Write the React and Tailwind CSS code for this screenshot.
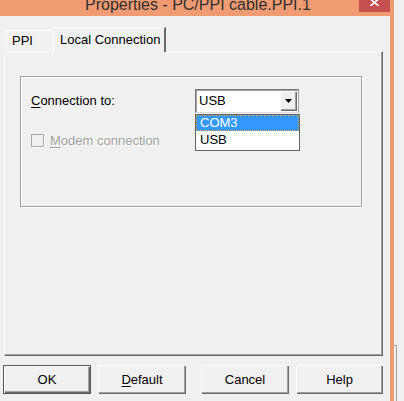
import React from "react";

const raised =
  "shadow-[inset_1px_1px_0_#ffffff,inset_-1px_-1px_0_#696969,inset_-2px_-2px_0_#a0a0a0]";

function Btn({ children, isDefault, className = "" }) {
  return (
    <div
      className={`h-[29px] flex items-center justify-center bg-[#f0f0f0] text-[13px] text-black ${
        isDefault ? "border border-[#555555]" : ""
      } ${raised} ${className}`}
    >
      {children}
    </div>
  );
}

export default function App() {
  return (
    <div className="flex w-[404px] h-[401px] bg-[#f0f0f0] overflow-hidden font-['Liberation_Sans','Arial',sans-serif] text-black">
      {/* main window */}
      <div className="w-[390px] h-full flex flex-col">
        {/* title bar */}
        <div className="h-[16px] bg-[#f19b72] flex overflow-hidden">
          <div className="flex-1 flex items-end pl-[85px] pb-[3px]">
            <span className="text-[16px] leading-[16px] text-[#2f2f2f] whitespace-nowrap">
              Properties - PC/PPI cable.PPI.1
            </span>
          </div>
          <div className="w-[31px] h-[12px] bg-[#c75050] flex justify-center">
            <svg width="9" height="7" viewBox="0 0 9 7" className="mt-[-1px]">
              <path d="M0.5 0 L8.5 7 M8.5 0 L0.5 7" stroke="#ffffff" strokeWidth="1.6" />
            </svg>
          </div>
        </div>

        {/* body */}
        <div className="flex-1 flex flex-col pt-[11px]">
          {/* tabs */}
          <div className="h-[24px] flex items-end pl-[6px]">
            <div className="w-[47px] h-[21px] border-t border-l border-white flex items-center pl-[5px] text-[13px]">
              PPI
            </div>
            <div className="relative z-10 w-[113px] h-[25px] mb-[-1px] bg-[#f0f0f0] border-t border-l border-white border-r-2 border-r-[#696969] flex items-center pl-[6px] text-[13px]">
              Local Connection
            </div>
          </div>

          {/* panel */}
          <div className="ml-[4px] w-[379px] h-[305px] border-t border-l border-white border-r border-b border-r-[#696969] border-b-[#696969] shadow-[inset_-1px_-1px_0_#a0a0a0]">
            {/* group box */}
            <div className="relative mt-[24px] ml-[15px] w-[342px] h-[131px] border border-[#a0a0a0] shadow-[inset_1px_1px_0_#ffffff,1px_1px_0_#ffffff] pt-[12px] pl-[10px]">
              <div className="flex items-center h-[24px]">
                <div className="w-[164px] text-[13px]">
                  <span className="underline underline-offset-2">C</span>onnection to:
                </div>
                <div className="w-[104px] h-[24px] bg-white border border-[#7a7a7a] border-b-[#dcdcdc] border-r-[#a0a0a0] shadow-[inset_1px_1px_0_#a0a0a0] flex items-center">
                  <span className="pl-[3px] text-[13px]">USB</span>
                  <div
                    className={`ml-auto mr-[1px] w-[17px] h-[20px] bg-[#f0f0f0] flex items-center justify-center ${raised}`}
                  >
                    <svg width="7" height="4" viewBox="0 0 7 4">
                      <path d="M0 0 L7 0 L3.5 4 Z" fill="#000000" />
                    </svg>
                  </div>
                </div>
              </div>
              <div className="flex items-center mt-[18px]">
                <div className="w-[13px] h-[13px] border border-[#a8a8a8] bg-[#f0f0f0] shadow-[1px_1px_0_#ffffff]" />
                <div className="ml-[6px] text-[13px] text-[#a0a0a0] [text-shadow:1px_1px_0_#ffffff]">
                  <span className="underline underline-offset-2">M</span>odem connection
                </div>
              </div>

              {/* dropdown list */}
              <div className="absolute left-[174px] top-[37px] w-[105px] h-[37px] bg-white border border-[#646464] flex flex-col">
                <div className="h-[16px] bg-[#3399ff] border border-dotted border-[#f0a050] text-white text-[13px] leading-[14px] pl-[3px]">
                  COM3
                </div>
                <div className="h-[17px] text-[13px] leading-[17px] pl-[4px]">USB</div>
              </div>
            </div>
          </div>

          {/* buttons */}
          <div className="flex mt-[9px] pl-[3px]">
            <Btn isDefault className="w-[88px]">OK</Btn>
            <Btn className="w-[88px] ml-[7px]">
              <span>
                <span className="underline underline-offset-2">D</span>efault
              </span>
            </Btn>
            <Btn className="w-[88px] ml-[15px]">Cancel</Btn>
            <Btn className="w-[87px] ml-[7px]">Help</Btn>
          </div>
        </div>
      </div>

      {/* window right border */}
      <div className="w-[4px] h-full bg-[#f19b72]" />

      {/* background behind */}
      <div className="flex-1 h-full bg-[#f0f0f0]">
        <div className="mt-[345px] w-[3px] h-[60px] border-t border-r border-[#a0a0a0]" />
      </div>
    </div>
  );
}
